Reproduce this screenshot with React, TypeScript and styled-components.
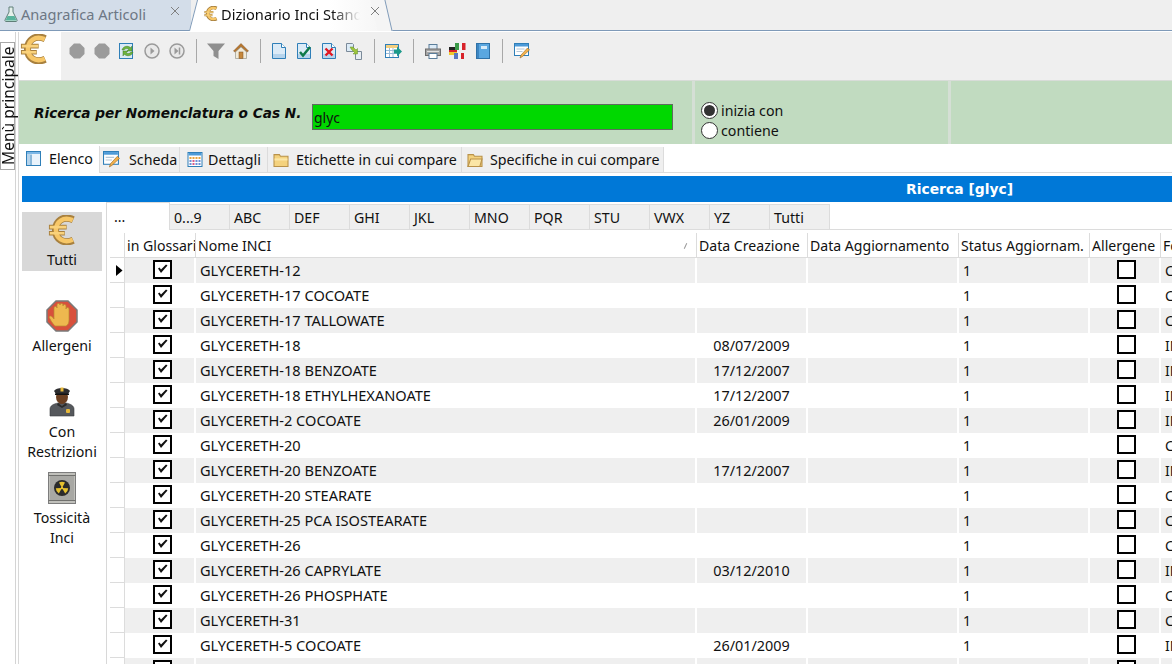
import React from "react";
import styled, { createGlobalStyle } from "styled-components";

const GlobalStyle = createGlobalStyle`
  html, body { margin: 0; padding: 0; background: #fff; }
  body { font-family: "Noto Sans", "Open Sans", sans-serif; font-size: 14px; color: #111; }
`;

const Page = styled.div`
  width: 1172px;
  height: 664px;
  overflow: hidden;
  display: flex;
  flex-direction: column;
  background: #fff;
`;

/* top document tabs */
const DocTabs = styled.div`
  height: 30px;
  flex: none;
  display: flex;
  background: #efefef;
  border-bottom: 1px solid #7f9ab8;
`;

const DocTabIdle = styled.div`
  width: 191px;
  height: 30px;
  box-sizing: border-box;
  padding: 0 0 3px 4px;
  display: flex;
  align-items: center;
  background: #d3dde9;
  color: #6d7784;
  font-size: 14.6px;
  gap: 3px;
`;

const DocTabActive = styled.div`
  position: relative;
  margin-left: 6px;
  width: 188px;
  height: 31px;
  box-sizing: border-box;
  padding: 0 0 4px 7px;
  display: flex;
  align-items: center;
  background: linear-gradient(to right, #fff 70%, #f5f5f5 100%);
  font-size: 14.6px;
  gap: 3px;
  z-index: 1;
  &::before, &::after {
    content: "";
    position: absolute;
    top: 0;
    bottom: 0;
    width: 14px;
    z-index: -1;
  }
  &::before { left: -4px; background: #fff; border-left: 1px solid #7f9ab8; transform: skewX(-14.5deg); }
  &::after { right: -4px; background: #f5f5f5; border-right: 1px solid #7f9ab8; transform: skewX(13deg); }
`;

const DocTabLabel = styled.span`
  white-space: nowrap;
`;

const FadedLabel = styled.span`
  width: 139px;
  overflow: hidden;
  white-space: nowrap;
  -webkit-mask-image: linear-gradient(to right, #000 80%, transparent 100%);
  mask-image: linear-gradient(to right, #000 80%, transparent 100%);
`;

const CloseSlot = styled.span<{ $left: number }>`
  margin-left: ${(p) => p.$left}px;
  margin-top: -5px;
  display: flex;
`;

const Body = styled.div`
  flex: 1;
  min-height: 0;
  margin-top: 1px;
  display: flex;
`;

const Rail = styled.div`
  width: 15px;
  flex: none;
  padding-top: 10px;
  border-right: 1px solid #d4d4d4;
`;

const RailLabel = styled.div`
  writing-mode: vertical-rl;
  transform: rotate(180deg);
  height: 128px;
  width: 15px;
  box-sizing: border-box;
  border: 1px solid #a8a8a8;
  font-size: 15.6px;
  line-height: 14px;
  text-align: center;
  white-space: nowrap;
  background: #fff;
`;

const Workspace = styled.div`
  flex: 1;
  min-width: 0;
  margin-left: 2px;
  border-left: 1px solid #d8d8d8;
  display: flex;
  flex-direction: column;
`;

/* toolbar */
const Toolbar = styled.div`
  height: 48px;
  flex: none;
  display: flex;
  background: #efefef;
`;

const BigIcon = styled.div`
  width: 42px;
  flex: none;
  padding: 2px 0 0 1px;
  box-sizing: border-box;
  background: #fff;
`;

const ToolIcons = styled.div`
  display: flex;
  align-items: center;
  height: 38px;
  padding-left: 3px;
`;

const ToolSlot = styled.div`
  width: 25px;
  display: flex;
  justify-content: center;
  align-items: center;
`;

const ToolSep = styled.div`
  width: 1px;
  height: 24px;
  margin: 0 6.5px;
  background: #a8a8a8;
`;

/* search panel */
const SearchPanel = styled.div`
  height: 63px;
  flex: none;
  display: flex;
  background: #c1dbc0;
  border-top: 1px solid #d8dcd8;
`;

const SearchMain = styled.div`
  width: 676px;
  flex: none;
  box-sizing: border-box;
  padding: 23px 0 0 15px;
  display: flex;
  align-items: flex-start;
  border-right: 3px solid #d5dfd5;
`;

const SearchLabel = styled.label`
  width: 278px;
  flex: none;
  font-family: "DejaVu Sans", sans-serif;
  font-style: italic;
  font-weight: 700;
  font-size: 13.65px;
  line-height: 18px;
  color: #0c0c0c;
`;

const SearchInput = styled.input`
  width: 361px;
  height: 26px;
  box-sizing: border-box;
  border: 1px solid #5f6b5f;
  background: #00d800;
  padding: 0 1px;
  font-family: "Noto Sans", sans-serif;
  font-size: 14px;
  color: #111;
  outline: none;
`;

const SearchOptions = styled.div`
  width: 256px;
  flex: none;
  box-sizing: border-box;
  padding: 19px 0 0 6px;
  border-right: 3px solid #d5dfd5;
  display: flex;
  flex-direction: column;
`;

const RadioRow = styled.div`
  display: flex;
  align-items: center;
  gap: 3px;
  height: 20px;
  font-size: 14.2px;
`;

const RadioDot = styled.span<{ $on?: boolean }>`
  width: 17px;
  height: 17px;
  box-sizing: border-box;
  border-radius: 50%;
  border: 1px solid #333;
  background: #fff;
  display: flex;
  align-items: center;
  justify-content: center;
  &::after {
    content: "";
    width: 11px;
    height: 11px;
    border-radius: 50%;
    background: ${(p) => (p.$on ? "#333" : "transparent")};
  }
`;

/* section tabs */
const SectionTabs = styled.div`
  height: 27px;
  margin-top: 1px;
  flex: none;
  display: flex;
  align-items: flex-end;
  border-bottom: 1px solid #dcdcdc;
`;

const SectionTab = styled.div<{ $width: number; $pad: number; $gap: number; $active?: boolean }>`
  width: ${(p) => p.$width}px;
  height: ${(p) => (p.$active ? 27 : 25)}px;
  box-sizing: border-box;
  margin-bottom: ${(p) => (p.$active ? -1 : 0)}px;
  padding-left: ${(p) => p.$pad}px;
  padding-bottom: ${(p) => (p.$active ? 2 : 0)}px;
  display: flex;
  align-items: center;
  gap: ${(p) => p.$gap}px;
  background: ${(p) => (p.$active ? "#fff" : "#efefef")};
  border: 1px solid #dcdcdc;
  border-width: 0 1px 0 0;
  font-size: 14.25px;
  white-space: nowrap;
`;

const BlueBar = styled.div`
  height: 26px;
  flex: none;
  margin: 3px 0 0 3px;
  padding-left: 884px;
  box-sizing: border-box;
  background: #0078d7;
  color: #fff;
  font-family: "DejaVu Sans", sans-serif;
  font-weight: 700;
  font-size: 13.9px;
  line-height: 26px;
  white-space: nowrap;
`;

/* lower area */
const Lower = styled.div`
  flex: 1;
  min-height: 0;
  display: flex;
`;

const SideNav = styled.div`
  width: 88px;
  flex: none;
  box-sizing: border-box;
  padding: 10px 0 0 3px;
  border-right: 1px solid #d8d8d8;
  display: flex;
  flex-direction: column;
`;

const SideItem = styled.div<{ $top?: number; $active?: boolean }>`
  width: 80px;
  margin-top: ${(p) => p.$top ?? 0}px;
  padding: 3px 0 1px;
  box-sizing: border-box;
  display: flex;
  flex-direction: column;
  align-items: center;
  background: ${(p) => (p.$active ? "#d8d8d8" : "transparent")};
`;

const SideIcon = styled.div`
  height: 32px;
  display: flex;
  justify-content: center;
`;

const SideLabel = styled.div<{ $gap: number }>`
  margin-top: ${(p) => p.$gap}px;
  font-size: 14.2px;
  line-height: 20px;
  text-align: center;
`;

const Content = styled.div`
  flex: 1;
  min-width: 0;
  display: flex;
  flex-direction: column;
`;

const AlphaTabs = styled.div`
  height: 27px;
  flex: none;
  display: flex;
  align-items: flex-end;
  border-bottom: 1px solid #dcdcdc;
`;

const AlphaTab = styled.div<{ $active?: boolean }>`
  width: ${(p) => (p.$active ? 63 : 60)}px;
  height: ${(p) => (p.$active ? 28 : 25)}px;
  margin-bottom: ${(p) => (p.$active ? -1 : 0)}px;
  box-sizing: border-box;
  padding-left: ${(p) => (p.$active ? 7 : 4)}px;
  display: flex;
  align-items: center;
  background: ${(p) => (p.$active ? "#fff" : "#efefef")};
  border: 1px solid #dcdcdc;
  border-width: 1px 1px 0 0;
  font-size: 14.2px;
`;

const Grid = styled.div`
  margin: 3px 0 0 3px;
  display: flex;
  flex-direction: column;
`;

const columns = "15px 71px 501px 111px 151px 131px 71px 60px";

const HeadRow = styled.div`
  display: grid;
  grid-template-columns: ${columns};
  height: 25px;
  border-bottom: 1px solid #dcdcdc;
  box-sizing: border-box;
`;

const HeadCell = styled.div`
  position: relative;
  box-sizing: border-box;
  padding-left: 2px;
  border-right: 1px solid #dcdcdc;
  font-size: 14.1px;
  line-height: 26px;
  white-space: nowrap;
  overflow: hidden;
`;

const SortMark = styled.span`
  position: absolute;
  right: 10px;
  top: 10px;
  width: 1px;
  height: 6px;
  background: #999;
  transform: rotate(25deg);
`;

const DataRow = styled.div<{ $odd: boolean }>`
  display: grid;
  grid-template-columns: ${columns};
  height: 25px;
  background: ${(p) => (p.$odd ? "#efefef" : "#fff")};
`;

const Pointer = styled.div`
  background: #fff;
  border-right: 1px solid #dcdcdc;
  border-bottom: 1px solid #dcdcdc;
  box-sizing: border-box;
  display: flex;
  align-items: center;
  padding-left: 6px;
`;

const Cell = styled.div`
  box-sizing: border-box;
  border-right: 2px solid #fff;
  padding-left: 4px;
  font-size: 14px;
  line-height: 25px;
  white-space: nowrap;
  overflow: hidden;
`;

const NameCell = styled(Cell)`
  font-size: 14.6px;
`;

const DateCell = styled(Cell)`
  padding-left: 0;
  text-align: center;
  font-size: 14.4px;
`;

const CheckCell = styled.div<{ $pad: number }>`
  box-sizing: border-box;
  border-right: 2px solid #fff;
  padding-left: ${(p) => p.$pad}px;
  display: flex;
  align-items: center;
  justify-content: center;
`;

const CheckBox = styled.span`
  width: 19px;
  height: 19px;
  margin-top: -3px;
  box-sizing: border-box;
  border: 2px solid #000;
  background: #fff;
  display: flex;
  align-items: center;
  justify-content: center;
`;

/* icons */
const Euro = ({ size = 30 }: { size?: number }) => (
  <svg width={size} height={size * 1.07} viewBox="0 0 30 32">
    <g fill="none">
      <path d="M27 5C16 0 8 7 8 16s8 16 19 11" stroke="#a8803e" strokeWidth="7.6" />
      <path d="M1 13h19M1 19.500h17" stroke="#a8803e" strokeWidth="5" />
      <path d="M26.500 5.500C16 1 8.500 7.500 8.500 16s7.500 15 18 10.500" stroke="#f7c768" strokeWidth="4.8" />
      <path d="M2 13h17.500M2 19.500h15.500" stroke="#f9d27c" strokeWidth="2.800" />
    </g>
  </svg>
);

const Cross = () => (
  <svg width="10" height="10" viewBox="0 0 10 10">
    <path d="M1 1l8 8M9 1l-8 8" fill="none" stroke="#808080" strokeWidth="1" />
  </svg>
);

const Flask = () => (
  <svg width="14" height="16" viewBox="0 0 14 16">
    <path d="M5 1h4v5l4 8c.3 1-.3 1.500-1 1.500H2c-.7 0-1.300-.5-1-1.500l4-8z" fill="#e4f0ea" stroke="#5f7f78" />
    <path d="M3.500 10h7l2 4.500H1.500z" fill="#58b39c" />
  </svg>
);

const Dot = () => (
  <svg width="16" height="16" viewBox="0 0 16 16">
    <path d="M5 .5h6L15.500 5v6L11 15.500H5L.5 11V5z" fill="#9b9b9b" />
  </svg>
);

const Media = ({ skip }: { skip?: boolean }) => (
  <svg width="16" height="16" viewBox="0 0 16 16">
    <circle cx="8" cy="8" r="7" fill="#e9e9e9" stroke="#9a9a9a" strokeWidth="1.500" />
    <path d={skip ? "M5.500 4.500l4 3.500-4 3.500z" : "M6.500 4.500l4 3.500-4 3.500z"} fill="#9a9a9a" />
    {skip && <path d="M10.500 4.500v7" stroke="#9a9a9a" strokeWidth="1.500" />}
  </svg>
);

const Reload = () => (
  <svg width="16" height="16" viewBox="0 0 16 16">
    <rect x=".5" y=".5" width="13" height="15" fill="#dbeaf7" stroke="#2f7fb8" />
    <path d="M3 7c1-4 6-5 9-2l1-2v5H8l2-1.500C8 5 6 5.500 5 7z" fill="#6db33f" stroke="#3f7d22" strokeWidth=".5" />
    <path d="M14 9c-1 4-6 5-9 2l-1 2V8h5L7 9.500c2 1.500 4 1 5-.5z" fill="#6db33f" stroke="#3f7d22" strokeWidth=".5" />
  </svg>
);

const Funnel = () => (
  <svg width="18" height="16" viewBox="0 0 18 16">
    <path d="M0 .5h18L11.500 8v8l-5-3V8z" fill="#8f8f8f" />
  </svg>
);

const Home = () => (
  <svg width="16" height="16" viewBox="0 0 16 16">
    <path d="M8 .5L.5 8l1.500 1L8 3.500 14 9l1.500-1z" fill="#b9762c" stroke="#7e5120" strokeWidth=".5" />
    <path d="M2.500 9L8 4l5.500 5v6.500h-11z" fill="#f1ead8" stroke="#8a8a7a" strokeWidth=".6" />
    <rect x="6" y="9" width="4" height="6.500" fill="#c6873a" stroke="#7e5120" strokeWidth=".5" />
  </svg>
);

const Sheet = ({ children }: { children?: React.ReactNode }) => (
  <svg width="15" height="16" viewBox="0 0 15 16">
    <path d="M.5.500h9l4 4v11H.5z" fill="#dcebf7" stroke="#2f7fb8" />
    <path d="M9.500.500v4h4" fill="#fff" stroke="#2f7fb8" />
    <rect x="1" y="11" width="12" height="4" fill="#b6d4ec" />
    {children}
  </svg>
);

const Copies = () => (
  <svg width="17" height="17" viewBox="0 0 17 17">
    <path d="M.5.500h6l1 1v7h-7z" fill="#dcebf7" stroke="#7b8a99" />
    <path d="M9.500 8.500h6v8h-6z" fill="#e8eef3" stroke="#7b8a99" />
    <path d="M4 4l3 0 3 3 1.500-1.500V11H7l1.500-1.500-3-3z" fill="#9cc53d" stroke="#67902a" strokeWidth=".5" />
  </svg>
);

const TableArrow = () => (
  <svg width="17" height="15" viewBox="0 0 17 15">
    <rect x=".5" y=".5" width="13" height="13" fill="#fff" stroke="#2f7fb8" />
    <path d="M1 1h12v3H1z" fill="#f3cf7e" />
    <path d="M1 6.500h12M1 9.500h12M4.500 4v9M8 4v9" stroke="#9bbcd8" />
    <path d="M9 5.500h3V2.500L17 7.500l-5 5v-3H9z" fill="#1c9a8a" />
  </svg>
);

const Printer = () => (
  <svg width="16" height="15" viewBox="0 0 16 15">
    <rect x="4" y=".5" width="8" height="5" fill="#dcebf7" stroke="#5a7d9a" />
    <rect x=".5" y="5" width="15" height="6.500" fill="#a5a5a5" stroke="#6c6c6c" />
    <path d="M2 7.500h12" stroke="#e2e2e2" />
    <rect x="4" y="9.500" width="8" height="5" fill="#fff" stroke="#5a7d9a" />
  </svg>
);

const Flags = () => (
  <svg width="17" height="16" viewBox="0 0 17 16">
    <rect x="0" y="4" width="8" height="3" fill="#222" />
    <rect x="0" y="7" width="8" height="2" fill="#d8232a" />
    <rect x="0" y="9" width="8" height="3" fill="#f0c92e" />
    <rect x="6" y="0" width="4" height="7" fill="#3a9a48" />
    <rect x="10" y="0" width="3" height="7" fill="#f3f3f3" />
    <rect x="13" y="0" width="3.500" height="7" fill="#d8232a" />
    <rect x="5" y="10" width="4" height="6" fill="#5a78c0" />
    <rect x="9" y="10" width="3" height="6" fill="#f3f3f3" />
    <rect x="12" y="10" width="3" height="6" fill="#d8232a" />
  </svg>
);

const Book = () => (
  <svg width="14" height="16" viewBox="0 0 14 16">
    <rect x=".5" y=".5" width="13" height="15" fill="#5aa7e0" stroke="#2f72a8" />
    <rect x="1" y="1" width="2" height="14" fill="#3d86c2" />
    <rect x="5" y="3" width="6" height="3" fill="#d6ebfa" />
  </svg>
);

const Form = ({ size = 16 }: { size?: number }) => (
  <svg width={size} height={size} viewBox="0 0 16 16">
    <rect x=".5" y=".5" width="14" height="12" fill="#fff" stroke="#2f7fb8" />
    <rect x="1" y="1" width="13" height="2.500" fill="#4c9ad8" />
    <path d="M2.500 6h8M2.500 8.500h6" stroke="#b5c8d8" />
    <path d="M6 15l1-3 6.500-7 2 2-7 6.500z" fill="#f2b24d" stroke="#9a6a25" strokeWidth=".6" />
  </svg>
);

const ListPanel = () => (
  <svg width="15" height="15" viewBox="0 0 15 15">
    <rect x=".5" y=".5" width="14" height="14" fill="#eaf3fb" stroke="#2f7fb8" />
    <rect x="1" y="1" width="13" height="2" fill="#7db7e6" />
    <rect x="1" y="3" width="3" height="11" fill="#b6d4ec" />
    <path d="M5 3.500v10.500" stroke="#2f7fb8" />
  </svg>
);

const Calendar = () => (
  <svg width="16" height="15" viewBox="0 0 15 15">
    <rect x=".5" y=".5" width="14" height="14" fill="#fff" stroke="#2f7fb8" />
    <rect x="1" y="1" width="13" height="2.500" fill="#4c9ad8" />
    {[2, 5, 8, 11].map((x) =>
      [5, 8, 11].map((y) => (
        <rect
          key={`${x}-${y}`}
          x={x}
          y={y}
          width="2"
          height="2"
          fill={y === 5 ? "#e8a33d" : x === 5 ? "#d95c8a" : "#6d8fd6"}
        />
      ))
    )}
  </svg>
);

const Folder = ({ open }: { open?: boolean }) => (
  <svg width="16" height="14" viewBox="0 0 14 13">
    <path d="M.5 1.500h5l1 1.500h7v9.500H.5z" fill="#f4d27e" stroke="#b9924a" />
    {open ? (
      <path d="M.5 12.500L3 5.500h10.500l-2 7z" fill="#fbe6a6" stroke="#b9924a" />
    ) : (
      <path d="M1 5h12v2H1z" fill="#fbe6a6" />
    )}
  </svg>
);

const Hand = () => (
  <svg width="32" height="32" viewBox="0 0 32 32">
    <path d="M10 1h12l9 9v12l-9 9H10l-9-9V10z" fill="#d8503c" stroke="#7a7a7a" strokeWidth="1.500" />
    <path
      d="M9 26c-3-3-5-7-6-9 1-2 3-1 5 2V8c0-2 3-2 3 0V5c0-2 3-2 3 0v0c0-2 3-2 3 0v1c0-2 3-2 3 0v3c0-2 3-2 3 0v11c0 3-1 5-3 6z"
      fill="#eeb84f"
      stroke="#b98a30"
      strokeWidth=".7"
    />
  </svg>
);

const Officer = () => (
  <svg width="26" height="32" viewBox="0 0 26 32">
    <path d="M1 31v-7c0-3 3-5 8-6h8c5 1 8 3 8 6v7z" fill="#55585c" stroke="#3a3c3f" strokeWidth=".6" />
    <ellipse cx="13" cy="12" rx="6" ry="7" fill="#6b3f20" />
    <path d="M9 18l4 3 4-3 1 2-5 3-5-3z" fill="#2b2b2b" />
    <path d="M5 6c2-4 14-4 16 0l-2 3H7z" fill="#2c2c2e" />
    <path d="M6 8.500h14v1.500H6z" fill="#111" />
    <rect x="11.500" y="2.500" width="3" height="4" fill="#e6b83a" />
    <rect x="17" y="24" width="4" height="4" rx="1" fill="#e6b83a" />
  </svg>
);

const Barrel = () => (
  <svg width="28" height="32" viewBox="0 0 28 32">
    <rect x=".5" y=".5" width="27" height="31" fill="#c0c0bb" stroke="#7d7d7d" />
    <rect x="2" y="3" width="24" height="26" fill="#a8a8a4" />
    <path d="M.5 3.500h27M.5 28.500h27" stroke="#70706d" />
    <circle cx="14" cy="16" r="8" fill="#2b2b2b" />
    <path d="M14 16l-3-5.500a6.500 6.500 0 0 1 6 0zM14 16l6.200.3a6.500 6.500 0 0 1-3 5.200zM14 16l-3.200 5.500a6.500 6.500 0 0 1-3-5.200z" fill="#e6c12f" />
    <circle cx="14" cy="16" r="1.200" fill="#e6c12f" />
  </svg>
);

const Tick = () => (
  <svg width="11" height="10" viewBox="0 0 11 10">
    <path d="M1 4.500l1.500-1 1.500 2L9 .5l1.500 1L4 9z" fill="#111" />
  </svg>
);

const Arrow = () => (
  <svg width="7" height="11" viewBox="0 0 7 11">
    <path d="M0 0l6.500 5.500L0 11z" fill="#000" />
  </svg>
);

const RowPointer = ({ on }: { on: boolean }) => <Pointer>{on && <Arrow />}</Pointer>;

type Row = { name: string; date: string; last: string };

const rows: Row[] = [
  { name: "GLYCERETH-12", date: "", last: "C" },
  { name: "GLYCERETH-17 COCOATE", date: "", last: "C" },
  { name: "GLYCERETH-17 TALLOWATE", date: "", last: "C" },
  { name: "GLYCERETH-18", date: "08/07/2009", last: "IN" },
  { name: "GLYCERETH-18 BENZOATE", date: "17/12/2007", last: "IN" },
  { name: "GLYCERETH-18 ETHYLHEXANOATE", date: "17/12/2007", last: "IN" },
  { name: "GLYCERETH-2 COCOATE", date: "26/01/2009", last: "IN" },
  { name: "GLYCERETH-20", date: "", last: "C" },
  { name: "GLYCERETH-20 BENZOATE", date: "17/12/2007", last: "IN" },
  { name: "GLYCERETH-20 STEARATE", date: "", last: "C" },
  { name: "GLYCERETH-25 PCA ISOSTEARATE", date: "", last: "C" },
  { name: "GLYCERETH-26", date: "", last: "C" },
  { name: "GLYCERETH-26 CAPRYLATE", date: "03/12/2010", last: "IN" },
  { name: "GLYCERETH-26 PHOSPHATE", date: "", last: "C" },
  { name: "GLYCERETH-31", date: "", last: "C" },
  { name: "GLYCERETH-5 COCOATE", date: "26/01/2009", last: "IN" },
  { name: "", date: "", last: "" },
];

const letters = ["0...9", "ABC", "DEF", "GHI", "JKL", "MNO", "PQR", "STU", "VWX", "YZ", "Tutti"];

export default function App() {
  return (
    <Page>
      <GlobalStyle />
      <DocTabs>
        <DocTabIdle>
          <Flask />
          <DocTabLabel>Anagrafica Articoli</DocTabLabel>
          <CloseSlot $left={21}><Cross /></CloseSlot>
        </DocTabIdle>
        <DocTabActive>
          <Euro size={14} />
          <FadedLabel>Dizionario Inci Standard</FadedLabel>
          <CloseSlot $left={7}><Cross /></CloseSlot>
        </DocTabActive>
      </DocTabs>
      <Body>
        <Rail>
          <RailLabel>Menù principale</RailLabel>
        </Rail>
        <Workspace>
          <Toolbar>
            <BigIcon>
              <Euro size={28} />
            </BigIcon>
            <ToolIcons>
              <ToolSlot><Dot /></ToolSlot>
              <ToolSlot><Dot /></ToolSlot>
              <ToolSlot><Reload /></ToolSlot>
              <ToolSlot><Media /></ToolSlot>
              <ToolSlot><Media skip /></ToolSlot>
              <ToolSep />
              <ToolSlot><Funnel /></ToolSlot>
              <ToolSlot><Home /></ToolSlot>
              <ToolSep />
              <ToolSlot><Sheet /></ToolSlot>
              <ToolSlot>
                <Sheet>
                  <path d="M3 9l3 3.500L13 4" fill="none" stroke="#0f7a4a" strokeWidth="2.500" />
                </Sheet>
              </ToolSlot>
              <ToolSlot>
                <Sheet>
                  <path d="M3.500 5.500l7 7M10.500 5.500l-7 7" fill="none" stroke="#e01822" strokeWidth="2.400" />
                </Sheet>
              </ToolSlot>
              <ToolSlot><Copies /></ToolSlot>
              <ToolSep />
              <ToolSlot><TableArrow /></ToolSlot>
              <ToolSep />
              <ToolSlot><Printer /></ToolSlot>
              <ToolSlot><Flags /></ToolSlot>
              <ToolSlot><Book /></ToolSlot>
              <ToolSep />
              <ToolSlot><Form /></ToolSlot>
            </ToolIcons>
          </Toolbar>

          <SearchPanel>
            <SearchMain>
              <SearchLabel>Ricerca per Nomenclatura o Cas N.</SearchLabel>
              <SearchInput defaultValue="glyc" />
            </SearchMain>
            <SearchOptions>
              <RadioRow><RadioDot $on />inizia con</RadioRow>
              <RadioRow><RadioDot />contiene</RadioRow>
            </SearchOptions>
          </SearchPanel>

          <SectionTabs>
            <SectionTab $width={81} $pad={7} $gap={8} $active><ListPanel />Elenco</SectionTab>
            <SectionTab $width={80} $pad={3} $gap={9}><Form size={17} />Scheda</SectionTab>
            <SectionTab $width={88} $pad={7} $gap={5}><Calendar />Dettagli</SectionTab>
            <SectionTab $width={194} $pad={5} $gap={7}><Folder />Etichette in cui compare</SectionTab>
            <SectionTab $width={202} $pad={5} $gap={7}><Folder open />Specifiche in cui compare</SectionTab>
          </SectionTabs>

          <BlueBar>Ricerca [glyc]</BlueBar>

          <Lower>
            <SideNav>
              <SideItem $active>
                <SideIcon><Euro size={28} /></SideIcon>
                <SideLabel $gap={3}>Tutti</SideLabel>
              </SideItem>
              <SideItem $top={26}>
                <SideIcon><Hand /></SideIcon>
                <SideLabel $gap={4}>Allergeni</SideLabel>
              </SideItem>
              <SideItem $top={25}>
                <SideIcon><Officer /></SideIcon>
                <SideLabel $gap={5}>Con<br />Restrizioni</SideLabel>
              </SideItem>
              <SideItem $top={6}>
                <SideIcon><Barrel /></SideIcon>
                <SideLabel $gap={4}>Tossicità<br />Inci</SideLabel>
              </SideItem>
            </SideNav>

            <Content>
              <AlphaTabs>
                <AlphaTab $active>...</AlphaTab>
                {letters.map((l) => (
                  <AlphaTab key={l}>{l}</AlphaTab>
                ))}
              </AlphaTabs>
              <Grid>
                <HeadRow>
                  <HeadCell />
                  <HeadCell>in Glossari</HeadCell>
                  <HeadCell>Nome INCI<SortMark /></HeadCell>
                  <HeadCell>Data Creazione</HeadCell>
                  <HeadCell>Data Aggiornamento</HeadCell>
                  <HeadCell>Status Aggiornam.</HeadCell>
                  <HeadCell>Allergene</HeadCell>
                  <HeadCell>Fo</HeadCell>
                </HeadRow>
                {rows.map((r, i) => (
                  <DataRow key={i} $odd={i % 2 === 0}>
                    <RowPointer on={i === 0} />
                    <CheckCell $pad={6}><CheckBox><Tick /></CheckBox></CheckCell>
                    <NameCell>{r.name}</NameCell>
                    <DateCell>{r.date}</DateCell>
                    <Cell />
                    <Cell>{r.name && "1"}</Cell>
                    <CheckCell $pad={4}><CheckBox /></CheckCell>
                    <Cell>{r.last}</Cell>
                  </DataRow>
                ))}
              </Grid>
            </Content>
          </Lower>
        </Workspace>
      </Body>
    </Page>
  );
}
